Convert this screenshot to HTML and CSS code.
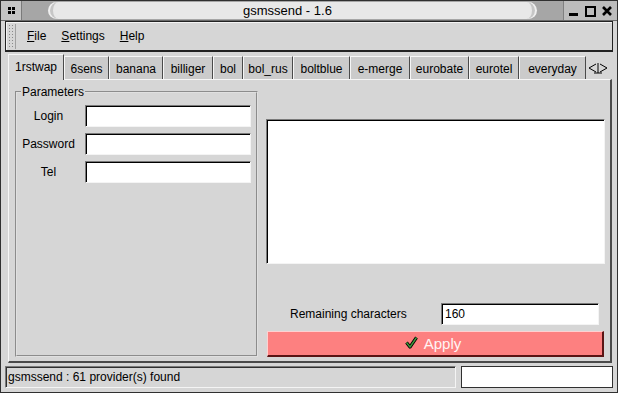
FILE: index.html
```html
<!DOCTYPE html>
<html>
<head>
<meta charset="utf-8">
<link rel="stylesheet" href="styles.css">
</head>
<body>
<div class="window">
  <div class="titlebar">
    <div class="tb-icon">
      <svg width="9" height="9" viewBox="0 0 9 9"><rect x="1" y="1" width="3" height="3" fill="#000"/><rect x="5" y="1" width="3" height="3" fill="#000"/><rect x="1" y="5" width="3" height="3" fill="#000"/><rect x="5" y="5" width="3" height="3" fill="#000"/></svg>
    </div>
    <div class="tb-mid">
      <div class="tb-pill"><span class="tb-title">gsmssend - 1.6</span></div>
    </div>
    <div class="tb-btns">
      <svg width="50" height="14" viewBox="0 0 50 14">
        <rect x="3" y="9" width="9" height="3" fill="#000"/>
        <rect x="20" y="3" width="9" height="9" fill="none" stroke="#000" stroke-width="2"/>
        <path d="M37 3 L45 11 M45 3 L37 11" stroke="#000" stroke-width="2.6"/>
      </svg>
    </div>
  </div>
  <div class="client">
    <div class="menubar">
      <div class="grip"></div>
      <span class="menu"><u>F</u>ile</span>
      <span class="menu"><u>S</u>ettings</span>
      <span class="menu"><u>H</u>elp</span>
    </div>
    <div class="notebook">
      <div class="tabs">
        <div class="tab active">1rstwap</div>
        <div class="tab">6sens</div>
        <div class="tab">banana</div>
        <div class="tab">billiger</div>
        <div class="tab">bol</div>
        <div class="tab">bol_rus</div>
        <div class="tab">boltblue</div>
        <div class="tab">e-merge</div>
        <div class="tab">eurobate</div>
        <div class="tab">eurotel</div>
        <div class="tab">everyday</div>
        <div class="tab-arrows">
          <svg width="22" height="14" viewBox="0 0 22 14">
            <path d="M9 3 L2 7 L9 11" fill="none" stroke="#000" stroke-width="1"/>
            <path d="M13 3 L20 7 L13 11" fill="none" stroke="#000" stroke-width="1"/>
            <path d="M11 2 L11 12 M7 12 L15 12" stroke="#000" stroke-width="1"/>
          </svg>
        </div>
      </div>
      <div class="page">
        <fieldset class="params">
          <legend>Parameters</legend>
          <div class="form">
            <label class="lbl">Login</label><div class="entry"></div>
            <label class="lbl">Password</label><div class="entry"></div>
            <label class="lbl">Tel</label><div class="entry"></div>
          </div>
        </fieldset>
        <div class="right">
          <div class="textbox"></div>
          <div class="spacer"></div>
          <div class="remaining">
            <span class="rem-label">Remaining characters</span>
            <div class="entry rem-entry">160</div>
          </div>
          <div class="apply">
            <svg width="13" height="13" viewBox="0 0 13 13"><path d="M1.5 6.5 L5 11 L11.5 1.5" fill="none" stroke="#000" stroke-width="3.2" stroke-linejoin="round"/><path d="M1.5 6.5 L5 11 L11.5 1.5" fill="none" stroke="#3c9a3c" stroke-width="1.4" stroke-linejoin="round"/></svg>
            <span>Apply</span>
          </div>
        </div>
      </div>
    </div>
    <div class="statusbar">
      <div class="status-msg">gsmssend : 61 provider(s) found</div>
      <div class="status-extra"></div>
    </div>
  </div>
</div>
</body>
</html>
```

FILE: styles.css
```css
* { box-sizing: border-box; }
html, body { margin: 0; padding: 0; }
body {
  background: #d6d6d6;
  font-family: "Liberation Sans", Arial, sans-serif;
  font-size: 12px;
  color: #000;
}
.window {
  width: 618px;
  height: 393px;
  border: 1px solid #303030;
  background: #d6d6d6;
  display: flex;
  flex-direction: column;
}
.titlebar {
  height: 20px;
  display: flex;
  background: #a6a6a6;
  border-bottom: 1px solid #6a6a6a;
}
.tb-icon {
  width: 21px;
  background: #c4c4c4;
  border-right: 1px solid #7a7a7a;
  display: flex;
  align-items: center;
  justify-content: center;
}
.tb-mid {
  flex: 1;
  display: flex;
  padding: 1px 28px 1px 28px;
}
.tb-pill {
  flex: 1;
  background: #e8e8e8;
  border-radius: 9px;
  border-left: 3px solid #c6c6c6;
  border-right: 3px solid #c6c6c6;
  box-shadow: -2px 0 0 #efefef, 2px 0 0 #efefef;
  display: flex;
  align-items: center;
  padding-left: 190px;
}
.tb-title {
  font-size: 13px;
  color: #000;
}
.tb-btns {
  width: 54px;
  background: #bcbcbc;
  border-left: 1px solid #808080;
  display: flex;
  align-items: center;
  justify-content: center;
}
.client {
  flex: 1;
  display: flex;
  flex-direction: column;
  padding: 0 4px 0 4px;
}
.menubar {
  height: 31px;
  border: 1px solid #222;
  border-bottom-width: 2px;
  display: flex;
  align-items: center;
  padding-left: 2px;
  box-shadow: inset 1px 1px 0 #f4f4f4;
}
.grip {
  width: 8px;
  height: 25px;
  margin-right: 11px;
  background-image: radial-gradient(circle, #8a8a8a 0.8px, transparent 1px);
  background-size: 3px 3px;
  border-right: 1px solid #a0a0a0;
}
.menu {
  margin-right: 15px;
}
.menu u { text-decoration: underline; }
.notebook {
  margin: 2px 1px 0 3px;
  display: flex;
  flex-direction: column;
}
.tabs {
  height: 25px;
  display: flex;
  align-items: flex-end;
  position: relative;
  z-index: 1;
}
.tab {
  height: 23px;
  background: #cbcbcb;
  border-top: 1px solid #f6f6f6;
  border-left: 1px solid #f6f6f6;
  border-right: 1px solid #4a4a4a;
  display: flex;
  align-items: center;
  justify-content: center;
  white-space: nowrap;
  padding-top: 1px;
}
.tab.active {
  height: 26px;
  margin-bottom: -1px;
  background: #d6d6d6;
  padding-bottom: 2px;
}
.tab:nth-child(1) { width: 56px; }
.tab:nth-child(2) { width: 45px; }
.tab:nth-child(3) { width: 54px; }
.tab:nth-child(4) { width: 50px; }
.tab:nth-child(5) { width: 30px; }
.tab:nth-child(6) { width: 50px; }
.tab:nth-child(7) { width: 57px; }
.tab:nth-child(8) { width: 60px; }
.tab:nth-child(9) { width: 59px; }
.tab:nth-child(10) { width: 50px; }
.tab:nth-child(11) { width: 67px; }
.tab-arrows {
  width: 24px;
  height: 23px;
  display: flex;
  align-items: center;
  justify-content: center;
}
.page {
  height: 284px;
  border-top: 1px solid #f6f6f6;
  border-left: 1px solid #f6f6f6;
  border-right: 2px solid #4a4a4a;
  border-bottom: 2px solid #4a4a4a;
  display: flex;
  padding: 5px 5px 4px 6px;
}
.params {
  margin: 0;
  width: 243px;
  border: 2px groove #e0e0e0;
  padding: 6px 4px 0 0;
}
.params legend {
  padding: 0 1px;
  margin-left: 4px;
  line-height: 14px;
}
.form {
  display: grid;
  grid-template-columns: 63px 166px;
  column-gap: 5px;
  row-gap: 6px;
  align-items: center;
}
.lbl {
  text-align: center;
}
.entry {
  height: 22px;
  background: #fff;
  border-top: 1px solid #7a7a7a;
  border-left: 1px solid #7a7a7a;
  border-right: 1px solid #f4f4f4;
  border-bottom: 1px solid #f4f4f4;
  box-shadow: inset 1px 1px 0 #000;
}
.right {
  flex: 1;
  margin-left: 8px;
  display: flex;
  flex-direction: column;
  padding-top: 34px;
}
.textbox {
  height: 145px;
  background: #fff;
  border-top: 1px solid #7a7a7a;
  border-left: 1px solid #7a7a7a;
  border-right: 1px solid #f4f4f4;
  border-bottom: 1px solid #f4f4f4;
  box-shadow: inset 1px 1px 0 #000;
}
.spacer { flex: 1; }
.remaining {
  display: flex;
  align-items: center;
  justify-content: space-between;
  padding: 0 6px 0 24px;
}
.rem-entry {
  width: 158px;
  padding: 3px 0 0 3px;
}
.apply {
  margin: 6px 1px 0 1px;
  height: 26px;
  background: #fd8080;
  border-top: 1px solid #ffd0d0;
  border-left: 1px solid #ffd0d0;
  border-right: 2px solid #5a1414;
  border-bottom: 2px solid #5a1414;
  display: flex;
  align-items: center;
  justify-content: center;
  gap: 6px;
  color: #fff4f4;
  font-size: 15px;
  padding-right: 4px;
}
.apply svg { margin-top: -2px; }
.statusbar {
  margin-top: 3px;
  height: 22px;
  display: flex;
}
.status-msg {
  width: 452px;
  border-top: 1px solid #7a7a7a;
  border-left: 1px solid #7a7a7a;
  border-right: 1px solid #f4f4f4;
  border-bottom: 1px solid #f4f4f4;
  box-shadow: inset 1px 1px 0 #303030;
  padding: 3px 0 0 2px;
  white-space: nowrap;
}
.status-extra {
  margin-left: 5px;
  width: 152px;
  background: #fff;
  border: 1px solid #303030;
}
```
